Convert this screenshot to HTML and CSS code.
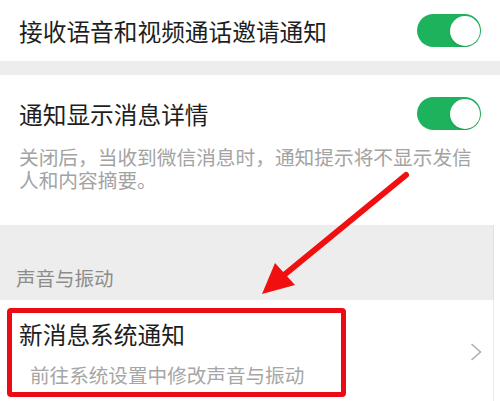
FILE: index.html
```html
<!DOCTYPE html>
<html lang="zh-CN">
<head>
    <meta charset="UTF-8">
    <title>新消息通知</title>
    <link rel="stylesheet" href="styles.css">
</head>
<body>
    <div class="page">
        <div class="cell cell-call">
            <span class="cell-title">接收语音和视频通话邀请通知</span>
            <span class="toggle on"><span class="knob"></span></span>
        </div>
        <div class="gap"></div>
        <div class="cell cell-detail">
            <div class="cell-head">
                <span class="cell-title">通知显示消息详情</span>
                <span class="toggle on"><span class="knob"></span></span>
            </div>
            <div class="cell-desc">关闭后，当收到微信消息时，通知提示将不显示发信人和内容摘要。</div>
        </div>
        <div class="section-title">声音与振动</div>
        <div class="cell cell-link">
            <div class="link-body">
                <div class="cell-title">新消息系统通知</div>
                <div class="link-sub">前往系统设置中修改声音与振动</div>
            </div>
            <svg class="chevron" width="12" height="18" viewBox="0 0 12 18">
                <path d="M1.5 1 L10.5 9 L1.5 17" fill="none" stroke="#b0b0b0" stroke-width="1.6"/>
            </svg>
            <div class="mark-box"></div>
        </div>

        <svg class="mark-arrow" width="500" height="401" viewBox="0 0 500 401">
            <line x1="406" y1="175" x2="278" y2="280" stroke="#f01010" stroke-width="6" stroke-linecap="round"/>
            <polygon points="262,294 275,263 295,285" fill="#f01010"/>
        </svg>
    </div>
</body>
</html>
```

FILE: styles.css
```css
body {
    margin: 0;
    background: #ffffff;
    font-family: "Noto Sans CJK SC", "Noto Sans", sans-serif;
    overflow: hidden;
}

.page {
    position: relative;
    width: 500px;
    height: 401px;
    overflow: hidden;
    background: #ffffff;
}

.cell {
    background: #ffffff;
    box-sizing: border-box;
}

.cell-title {
    font-size: 23.7px;
    line-height: 30px;
    color: #1e1e1e;
}

.cell-call {
    height: 61px;
    padding: 0 19px;
    display: flex;
    align-items: center;
    justify-content: space-between;
}

.gap {
    height: 14px;
    background: #ededed;
}

.cell-detail {
    height: 150px;
    padding: 22px 19px 0 19px;
}

.cell-head {
    height: 33px;
    display: flex;
    align-items: center;
    justify-content: space-between;
}

.cell-desc {
    margin-top: 15px;
    font-size: 19.7px;
    line-height: 23px;
    color: #a3a3a3;
}

.toggle {
    position: relative;
    width: 64px;
    height: 33px;
    border-radius: 17px;
    background: #e0e0e0;
    flex-shrink: 0;
}

.toggle.on {
    background: #1db35c;
}

.toggle .knob {
    position: absolute;
    top: 1.5px;
    right: 1.5px;
    width: 30px;
    height: 30px;
    border-radius: 50%;
    background: #ffffff;
    box-shadow: 0 1px 2px rgba(0, 0, 0, 0.15);
}

.section-title {
    height: 75px;
    box-sizing: border-box;
    padding: 41px 16px 0 16px;
    background: #ededed;
    font-size: 19.5px;
    line-height: 24px;
    color: #8c8c8c;
    border-right: 1px solid #e2e2e2;
    width: 494px;
}

.cell-link {
    position: relative;
    height: 101px;
    width: 494px;
    padding: 19px 11px 0 19px;
    display: flex;
    justify-content: space-between;
    align-items: flex-start;
    border-right: 1px solid #ececec;
}

.link-sub {
    margin-top: 14px;
    padding-left: 11px;
    font-size: 19.6px;
    line-height: 24px;
    color: #a6a6a6;
}

.chevron {
    margin-top: 24px;
}

.mark-box {
    position: absolute;
    left: 7px;
    top: 8px;
    width: 339px;
    height: 89px;
    box-sizing: border-box;
    border: 5px solid #ec0a14;
    border-radius: 4px;
}

.mark-arrow {
    position: absolute;
    left: 0;
    top: 0;
    pointer-events: none;
}
```
